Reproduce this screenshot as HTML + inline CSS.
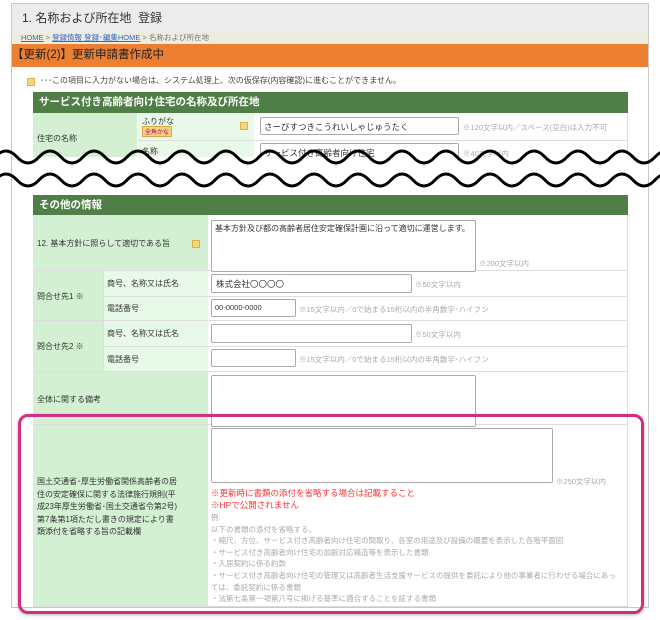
<!DOCTYPE html>
<html><head><meta charset="utf-8"><style>
*{box-sizing:border-box;margin:0;padding:0}
body{width:660px;height:620px;background:#fff;font-family:"Liberation Sans","Noto Sans CJK JP",sans-serif;position:relative;overflow:hidden;color:#333}
.abs{position:absolute}
.frame{left:11px;top:3px;width:638px;height:605px;border:1px solid #c8c8c8;background:#fff}
.tb{position:absolute;border:1px solid #aaa;background:#fff;border-radius:2px}
.g{background:#d3f0d3}
.lg{background:#e9f9e9}
.hdr{background:#4f7e47;color:#fff;font-weight:bold;font-size:10.5px;padding-left:6px;line-height:21px}
.sm{font-size:8px;color:#333}
.note{font-size:7.5px;color:#aaa}
.req{width:8px;height:8px;background:#f7d57a;border:1px solid #e0b050;position:absolute}
.line{position:absolute;background:#ddd}
</style></head><body>
<div class="abs frame"></div>
<div class="abs" style="left:12px;top:4px;width:636px;height:28px;background:#ececec;font-size:12px;line-height:28px;padding-left:10px;color:#333">1. 名称および所在地&nbsp; 登録</div>
<div class="abs" style="left:12px;top:32px;width:636px;height:12px;background:#ededdf;font-size:7.5px;line-height:12px;padding-left:9px;color:#777"><span style="color:#36c;text-decoration:underline">HOME</span> &gt; <span style="color:#36c;text-decoration:underline">登録情報 登録･編集HOME</span> &gt; 名称および所在地</div>
<div class="abs" style="left:12px;top:44px;width:636px;height:23px;background:#ec7f31;font-size:11.5px;line-height:23px;color:#222">【更新(2)】更新申請書作成中</div>
<div class="req" style="left:27px;top:78px"></div>
<div class="abs" style="left:40px;top:75px;font-size:8px;color:#444">･･･この項目に入力がない場合は、システム処理上、次の仮保存(内容確認)に進むことができません。</div>
<div class="abs hdr" style="left:33px;top:92px;width:595px;height:21px">サービス付き高齢者向け住宅の名称及び所在地</div>
<div class="abs g" style="left:33px;top:113px;width:104px;height:50px"></div>
<div class="abs lg" style="left:138px;top:113px;width:116px;height:50px"></div>
<div class="line" style="left:137px;top:140px;width:491px;height:1px"></div>
<div class="line" style="left:627px;top:113px;width:1px;height:50px"></div>
<div class="abs sm" style="left:37px;top:133px">住宅の名称</div>
<div class="abs sm" style="left:142px;top:116px">ふりがな</div>
<div class="abs" style="left:142px;top:126px;font-size:6px;background:#f6d27a;border:1px solid #d8a84c;padding:0 2px;color:#a05">全角かな</div>
<div class="req" style="left:240px;top:122px"></div>
<div class="tb" style="left:260px;top:117px;width:199px;height:18px;font-size:8.5px;padding:3px 3px">さーびすつきこうれいしゃじゅうたく</div>
<div class="abs note" style="left:463px;top:122px">※120文字以内／スペース(空白)は入力不可</div>
<div class="abs sm" style="left:142px;top:146px">名称</div>
<div class="tb" style="left:260px;top:143px;width:199px;height:18px;font-size:8.5px;padding:3px 3px">サービス付き高齢者向け住宅</div>
<div class="abs note" style="left:463px;top:148px">※40文字以内</div>
<svg class="abs" style="left:0;top:148px" width="660" height="48">
<rect x="0" y="9" width="660" height="39" fill="#fff"/>
<rect x="11" y="9" width="1" height="39" fill="#c8c8c8"/><rect x="648" y="9" width="1" height="39" fill="#c8c8c8"/>
<path d="M-5,9 q11,-12 22,0 t22,0 t22,0 t22,0 t22,0 t22,0 t22,0 t22,0 t22,0 t22,0 t22,0 t22,0 t22,0 t22,0 t22,0 t22,0 t22,0 t22,0 t22,0 t22,0 t22,0 t22,0 t22,0 t22,0 t22,0 t22,0 t22,0 t22,0 t22,0 t22,0 t22,0 t22,0" fill="none" stroke="#000" stroke-width="3"/>
<path d="M-5,32 q11,-12 22,0 t22,0 t22,0 t22,0 t22,0 t22,0 t22,0 t22,0 t22,0 t22,0 t22,0 t22,0 t22,0 t22,0 t22,0 t22,0 t22,0 t22,0 t22,0 t22,0 t22,0 t22,0 t22,0 t22,0 t22,0 t22,0 t22,0 t22,0 t22,0 t22,0 t22,0 t22,0" fill="none" stroke="#000" stroke-width="3"/>
</svg>
<div class="abs hdr" style="left:33px;top:195px;width:595px;height:20px;line-height:20px">その他の情報</div>
<div class="abs g" style="left:33px;top:215px;width:175px;height:392px"></div>
<div class="abs lg" style="left:103px;top:270px;width:105px;height:101px"></div>
<div class="line" style="left:103px;top:270px;width:1px;height:101px"></div>
<div class="line" style="left:627px;top:215px;width:1px;height:392px"></div>
<div class="line" style="left:33px;top:270px;width:595px;height:1px"></div>
<div class="line" style="left:103px;top:296px;width:525px;height:1px"></div>
<div class="line" style="left:33px;top:320px;width:595px;height:1px"></div>
<div class="line" style="left:103px;top:346px;width:525px;height:1px"></div>
<div class="line" style="left:33px;top:371px;width:595px;height:1px"></div>
<div class="line" style="left:33px;top:424px;width:595px;height:1px"></div>
<div class="line" style="left:33px;top:606px;width:595px;height:1px"></div>
<div class="abs sm" style="left:37px;top:238px">12. 基本方針に照らして適切である旨</div>
<div class="req" style="left:192px;top:240px"></div>
<div class="tb" style="left:211px;top:220px;width:265px;height:52px;font-size:8px;padding:2px 3px;line-height:11px">基本方針及び都の高齢者居住安定確保計画に沿って適切に運営します。</div>
<div class="abs note" style="left:479px;top:258px">※200文字以内</div>
<div class="abs sm" style="left:37px;top:291px">問合せ先1 ※</div>
<div class="abs sm" style="left:107px;top:278px">商号、名称又は氏名</div>
<div class="abs sm" style="left:107px;top:303px">電話番号</div>
<div class="tb" style="left:211px;top:274px;width:201px;height:19px;font-size:8.5px;padding:3px 4px">株式会社〇〇〇〇</div>
<div class="abs note" style="left:415px;top:279px">※50文字以内</div>
<div class="tb" style="left:211px;top:299px;width:85px;height:18px;font-size:7.5px;padding:3px 3px">00-0000-0000</div>
<div class="abs note" style="left:299px;top:304px">※15文字以内／0で始まる15桁以内の半角数字･ハイフン</div>
<div class="abs sm" style="left:37px;top:341px">問合せ先2 ※</div>
<div class="abs sm" style="left:107px;top:328px">商号、名称又は氏名</div>
<div class="abs sm" style="left:107px;top:354px">電話番号</div>
<div class="tb" style="left:211px;top:324px;width:201px;height:19px"></div>
<div class="abs note" style="left:415px;top:329px">※50文字以内</div>
<div class="tb" style="left:211px;top:349px;width:85px;height:18px"></div>
<div class="abs note" style="left:299px;top:354px">※15文字以内／0で始まる15桁以内の半角数字･ハイフン</div>
<div class="abs sm" style="left:37px;top:394px">全体に関する備考</div>
<div class="tb" style="left:211px;top:375px;width:265px;height:52px"></div>
<div class="abs sm" style="left:37px;top:476px;width:141px;line-height:12.6px">国土交通省･厚生労働省関係高齢者の居住の安定確保に関する法律施行規則(平成23年厚生労働省･国土交通省令第2号)第7条第1項ただし書きの規定により書類添付を省略する旨の記載欄</div>
<div class="tb" style="left:211px;top:428px;width:342px;height:55px"></div>
<div class="abs note" style="left:556px;top:476px">※250文字以内</div>
<div class="abs" style="left:211px;top:487px;font-size:8.5px;color:#f33;line-height:12px">※更新時に書類の添付を省略する場合は記載すること<br>※HPで公開されません</div>
<div class="abs note" style="left:211px;top:512px;line-height:11.6px;width:410px">例:<br>以下の書類の添付を省略する。<br>・縮尺、方位、サービス付き高齢者向け住宅の間取り、各室の用途及び設備の概要を表示した各階平面図<br>・サービス付き高齢者向け住宅の加齢対応構造等を表示した書類<br>・入居契約に係る約款<br>・サービス付き高齢者向け住宅の管理又は高齢者生活支援サービスの提供を委託により他の事業者に行わせる場合にあっては、委託契約に係る書類<br>・法第七条第一項第八号に掲げる基準に適合することを証する書類</div>
<div class="abs" style="left:18px;top:414px;width:626px;height:200px;border:3px solid #d22d82;border-radius:10px;box-shadow:0 1px 3px rgba(0,0,0,.3)"></div>
</body></html>
